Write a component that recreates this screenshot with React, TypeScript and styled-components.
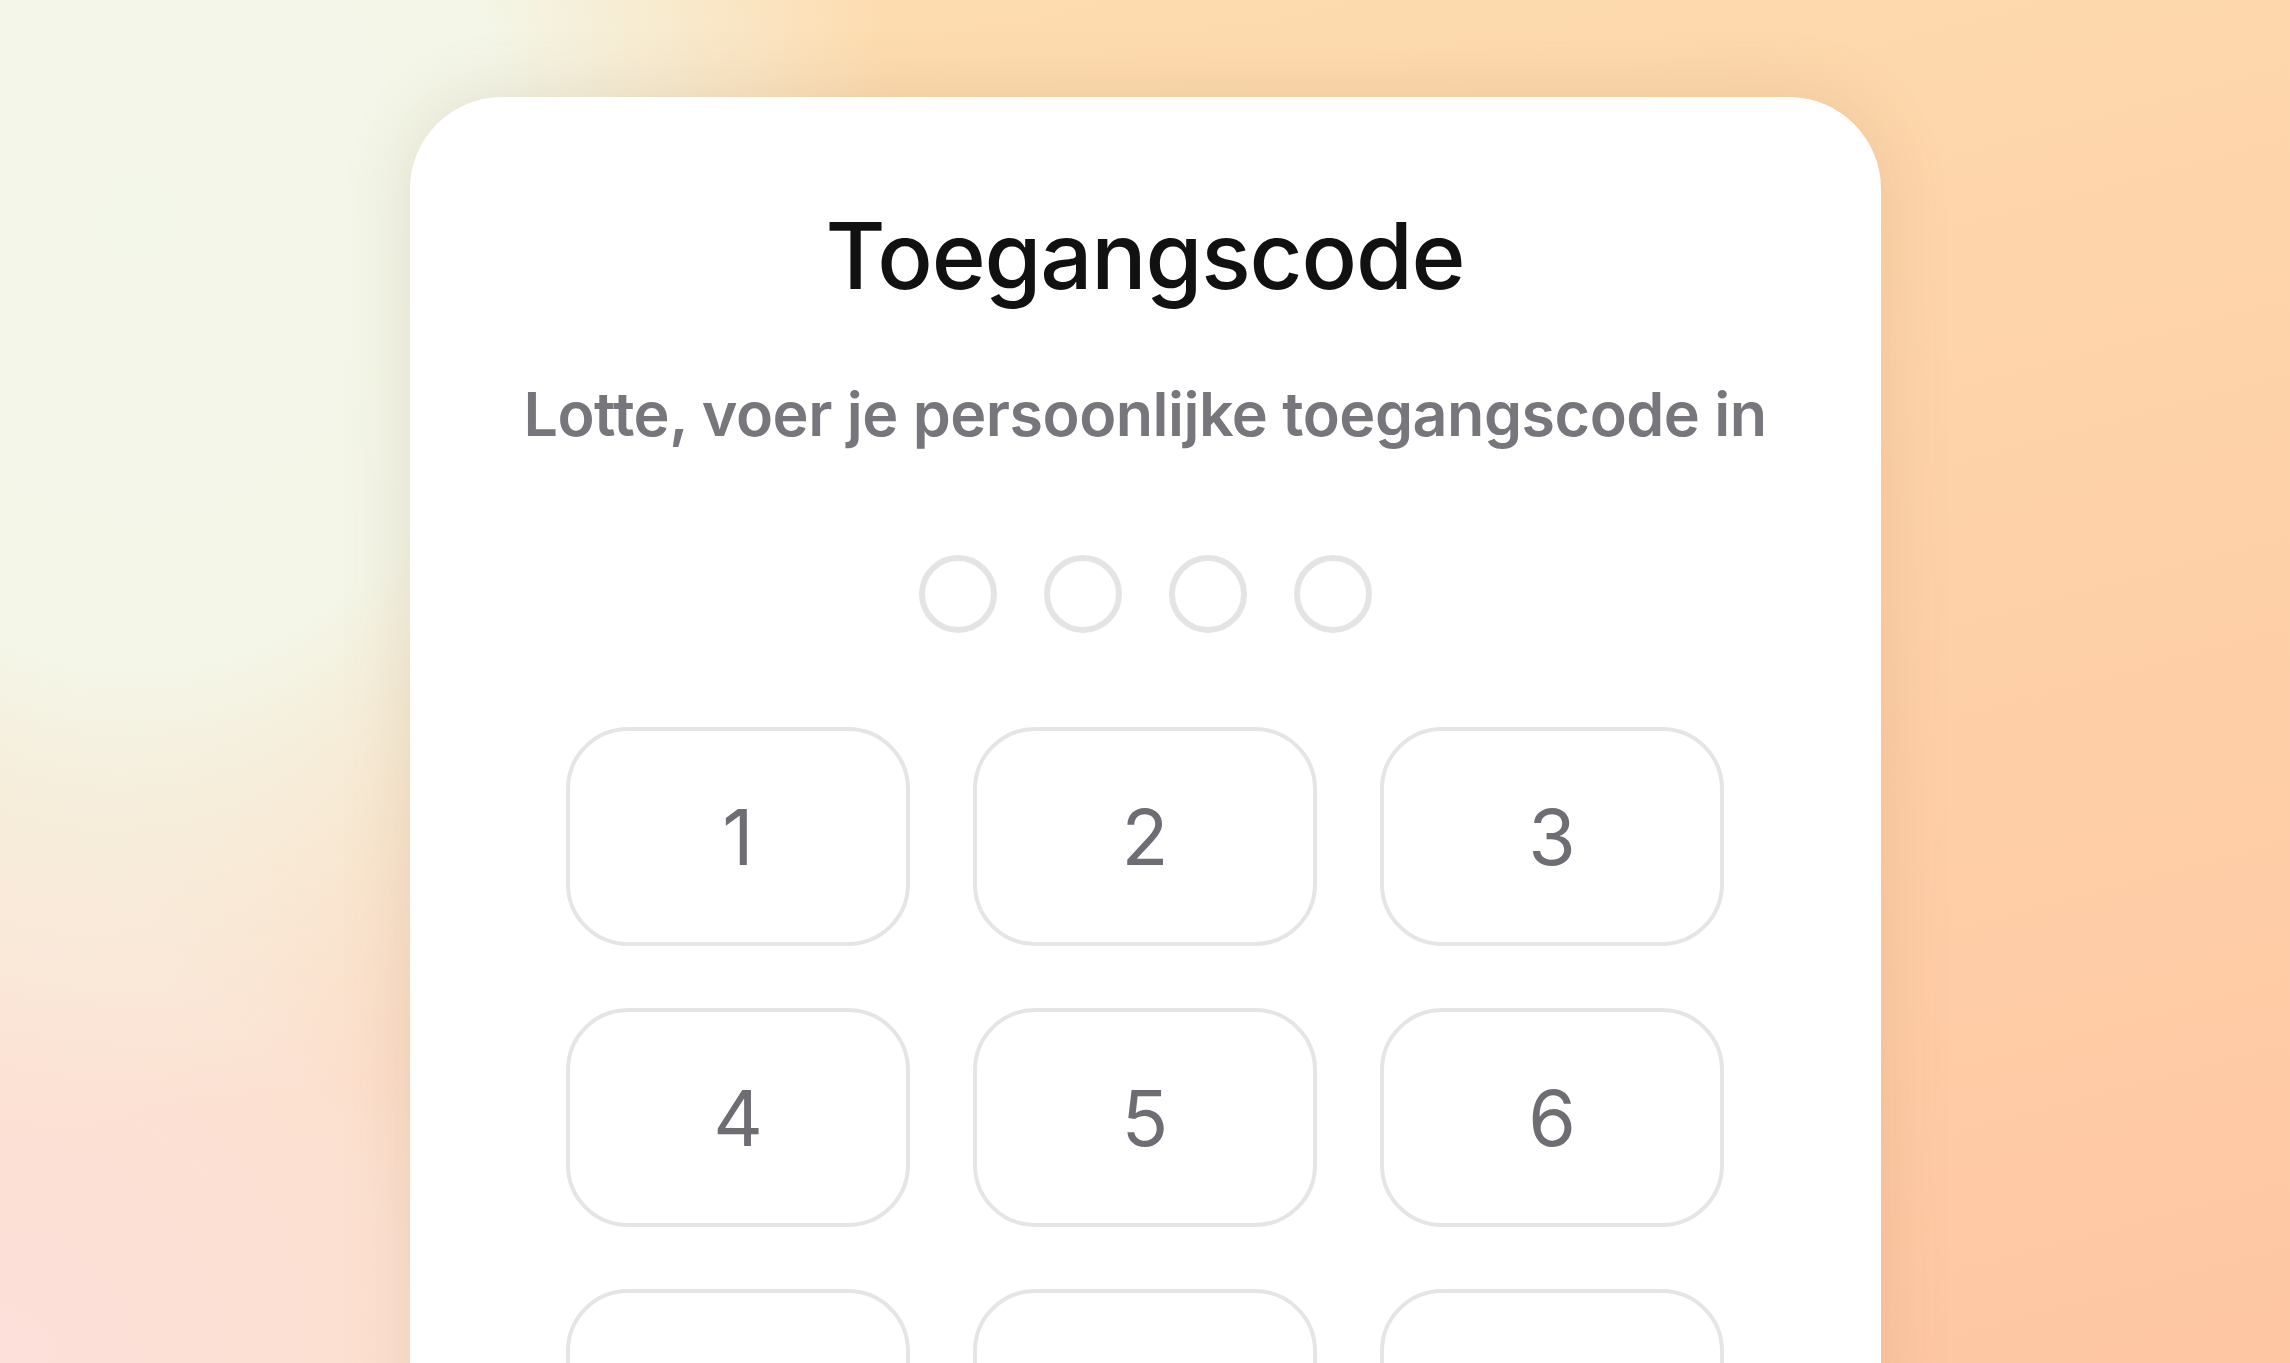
import React from "react";
import styled, { createGlobalStyle } from "styled-components";

const GlobalStyle = createGlobalStyle`
  html, body {
    margin: 0;
    padding: 0;
    height: 100%;
    overflow: hidden;
  }
  body {
    font-family: Inter, "Noto Sans", "Liberation Sans", sans-serif;
  }
  * { box-sizing: border-box; }
`;

const Page = styled.div`
  width: 100vw;
  height: 100vh;
  overflow: hidden;
  display: flex;
  justify-content: center;
  padding-top: 97px;
  background:
    radial-gradient(ellipse 760px 900px at 6% 16%, rgba(243, 247, 234, 1) 0%, rgba(243, 247, 234, 0.95) 50%, rgba(243, 247, 234, 0) 100%),
    radial-gradient(ellipse 820px 820px at 0% 100%, rgba(252, 224, 218, 1) 0%, rgba(252, 228, 216, 0.85) 50%, rgba(252, 230, 214, 0) 100%),
    linear-gradient(165deg, #fde0b3 0%, #fed6ab 35%, #fecea7 70%, #fec6a3 100%);
`;

const Card = styled.main`
  width: 1471px;
  height: 1500px;
  flex-shrink: 0;
  background: #ffffff;
  border-radius: 92px 92px 0 0;
  box-shadow: 0 0 70px rgba(140, 100, 60, 0.16);
  display: flex;
  flex-direction: column;
  align-items: center;
  padding-top: 113px;
  font-variant-ligatures: none;
`;

const Title = styled.h1`
  margin: 0;
  font-size: 92px;
  line-height: 1;
  font-weight: 500;
  color: #111111;
  letter-spacing: -1.2px;
`;

const Subtitle = styled.p`
  margin: 82px 0 0;
  font-size: 61px;
  line-height: 1;
  font-weight: 600;
  color: #76767c;
  letter-spacing: -0.5px;
`;

const DotRow = styled.div`
  display: flex;
  gap: 47px;
  margin-top: 110px;
`;

const Dot = styled.span<{ $filled?: boolean }>`
  width: 78px;
  height: 78px;
  border-radius: 50%;
  border: 6px solid #e4e4e4;
  background: ${(p) => (p.$filled ? "#e4e4e4" : "transparent")};
`;

const Keypad = styled.div`
  display: grid;
  grid-template-columns: repeat(3, 344px);
  grid-auto-rows: 219px;
  column-gap: 63px;
  row-gap: 62px;
  margin-top: 94px;
`;

const Key = styled.button`
  border: 4px solid #e5e5e5;
  border-radius: 62px;
  background: #ffffff;
  display: flex;
  align-items: center;
  justify-content: center;
  font-family: Inter, "Noto Sans", "Liberation Sans", sans-serif;
  font-size: 77px;
  font-weight: 400;
  color: #6d6d73;
  padding: 0;
  cursor: pointer;
`;

const keys = ["1", "2", "3", "4", "5", "6", "7", "8", "9"];

export default function App() {
  return (
    <>
      <GlobalStyle />
      <Page>
        <Card>
          <Title>Toegangscode</Title>
          <Subtitle>Lotte, voer je persoonlijke toegangscode in</Subtitle>
          <DotRow>
            <Dot />
            <Dot />
            <Dot />
            <Dot />
          </DotRow>
          <Keypad>
            {keys.map((k) => (
              <Key key={k}>{k}</Key>
            ))}
          </Keypad>
        </Card>
      </Page>
    </>
  );
}
